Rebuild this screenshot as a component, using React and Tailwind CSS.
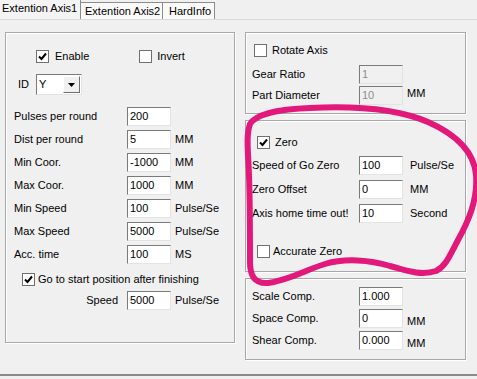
import React from 'react'

const Check = ({ checked }) => (
  <span className="w-[13px] h-[13px] shrink-0 bg-white border border-[#707070] flex items-center justify-center">
    {checked && (
      <svg width="9" height="9" viewBox="0 0 9 9">
        <path d="M1 4.5 L3.5 7 L8 1.5" fill="none" stroke="#000" strokeWidth="2" />
      </svg>
    )}
  </span>
)

const Box = ({ value, disabled, w = 'w-[44px]' }) => (
  <div
    className={`${w} h-[19px] shrink-0 border border-t-[#7a7a7a] border-l-[#7a7a7a] border-b-[#e3e3e3] border-r-[#e3e3e3] px-[2px] leading-[17px] ${
      disabled ? 'bg-[#f0f0f0] text-[#8d8d8d]' : 'bg-white text-black'
    }`}
  >
    {value}
  </div>
)

const Field = ({ label, value, unit, labelW, unitGap = 'ml-[4px]', disabled, unitClass = '' }) => (
  <div className="flex items-center h-[19px]">
    <span className={`${labelW} shrink-0 whitespace-nowrap`}>{label}</span>
    <Box value={value} disabled={disabled} />
    {unit && <span className={`${unitGap} whitespace-nowrap ${unitClass}`}>{unit}</span>}
  </div>
)

const Group = ({ className, children }) => (
  <div className={`border border-[#a8a8a8] shadow-[inset_1px_1px_0_#fff,1px_1px_0_#fff] flex flex-col ${className}`}>
    {children}
  </div>
)

const App = () => {
  const left = [
    ['Pulses per round', '200', ''],
    ['Dist per round', '5', 'MM'],
    ['Min Coor.', '-1000', 'MM'],
    ['Max Coor.', '1000', 'MM'],
    ['Min Speed', '100', 'Pulse/Se'],
    ['Max Speed', '5000', 'Pulse/Se'],
    ['Acc. time', '100', 'MS'],
  ]

  return (
    <div
      className="relative w-[477px] h-[379px] bg-[#f0f0f0] overflow-hidden text-[11px] text-black"
      style={{ fontFamily: '"Liberation Sans", Arial, sans-serif' }}
    >
      {/* tab strip */}
      <div className="flex items-end h-[19px]">
        <div className="h-[19px] w-[81px] pl-[2px] leading-[17px] bg-[#f4f4f4] border-r border-[#8c8c8c] relative z-10 whitespace-nowrap">
          Extention Axis1
        </div>
        <div className="h-[17px] w-[82px] pl-[4px] leading-[16px] bg-[#fafafa] border border-b-0 border-l-0 border-[#8c8c8c] whitespace-nowrap">
          Extention Axis2
        </div>
        <div className="h-[17px] w-[52px] pl-[6px] leading-[16px] bg-[#fafafa] border border-b-0 border-l-0 border-[#8c8c8c] whitespace-nowrap">
          HardInfo
        </div>
      </div>

      {/* tab page */}
      <div className="h-[357px] border-t border-[#dadada] border-b-2 border-b-[#8a8a8a] flex pt-[12px] pl-[5px]">
        {/* left group */}
        <Group className="w-[230px] h-[311px] pl-[8px]">
          <div className="flex items-center h-[14px] mt-[16px] ml-[22px]">
            <Check checked />
            <span className="ml-[6px]">Enable</span>
            <span className="ml-[50px]"><Check /></span>
            <span className="ml-[5px]">Invert</span>
          </div>
          <div className="flex items-center h-[21px] mt-[11px] ml-[4px]">
            <span className="w-[18px]">ID</span>
            <div className="w-[46px] h-[21px] bg-white border border-t-[#7a7a7a] border-l-[#7a7a7a] border-b-[#e3e3e3] border-r-[#e3e3e3] flex items-center justify-between pl-[2px]">
              <span>Y</span>
              <div className="w-[17px] h-[17px] mr-[1px] bg-[#f0f0f0] border border-t-white border-l-white border-b-[#6f6f6f] border-r-[#6f6f6f] flex items-center justify-center">
                <svg width="7" height="4" viewBox="0 0 7 4">
                  <path d="M0 0 H7 L3.5 4 Z" fill="#000" />
                </svg>
              </div>
            </div>
          </div>
          <div className="flex flex-col gap-[4px] mt-[12px]">
            {left.map(([l, v, u]) => (
              <Field key={l} label={l} value={v} unit={u} labelW="w-[113px]" />
            ))}
          </div>
          <div className="flex items-center h-[13px] mt-[9px] ml-[8px]">
            <Check checked />
            <span className="ml-[3px]">Go to start position after finishing</span>
          </div>
          <div className="flex items-center h-[19px] mt-[5px]">
            <span className="w-[113px] text-right pr-[9px]">Speed</span>
            <Box value="5000" />
            <span className="ml-[4px]">Pulse/Se</span>
          </div>
        </Group>

        {/* right column */}
        <div className="flex flex-col ml-[10px] w-[221px]">
          <Group className="h-[82px] pl-[6px]">
            <div className="flex items-center h-[13px] mt-[11px] ml-[2px]">
              <Check />
              <span className="ml-[5px]">Rotate Axis</span>
            </div>
            <div className="flex flex-col gap-[2px] mt-[8px]">
              <Field label="Gear Ratio" value="1" labelW="w-[107px]" disabled />
              <Field label="Part Diameter" value="10" unit="MM" labelW="w-[107px]" disabled unitClass="-mt-[5px]" />
            </div>
          </Group>

          <Group className="h-[152px] mt-[6px] pl-[6px]">
            <div className="flex items-center h-[13px] mt-[15px] ml-[5px]">
              <Check checked />
              <span className="ml-[5px]">Zero</span>
            </div>
            <div className="flex flex-col gap-[5px] mt-[7px]">
              <Field label="Speed of Go Zero" value="100" unit="Pulse/Se" labelW="w-[107px]" unitGap="ml-[7px]" />
              <Field label="Zero Offset" value="0" unit="MM" labelW="w-[107px]" unitGap="ml-[7px]" />
              <Field label="Axis home time out!" value="10" unit="Second" labelW="w-[107px]" unitGap="ml-[7px]" />
            </div>
            <div className="flex items-center h-[13px] mt-[22px] ml-[5px]">
              <Check />
              <span className="ml-[3px]">Accurate Zero</span>
            </div>
          </Group>

          <Group className="h-[82px] mt-[6px] pl-[6px]">
            <div className="flex flex-col gap-[3px] mt-[8px]">
              <Field label="Scale Comp." value="1.000" labelW="w-[107px]" />
              <Field label="Space Comp." value="0" unit="MM" labelW="w-[107px]" unitClass="mt-[5px]" />
              <Field label="Shear Comp." value="0.000" unit="MM" labelW="w-[107px]" unitClass="mt-[5px]" />
            </div>
          </Group>
        </div>
      </div>

      {/* pink annotation scribble */}
      <svg className="absolute left-0 top-0 pointer-events-none" width="477" height="379" viewBox="0 0 477 379">
        <path
          d="M250 124 C256 114 280 109 310 108 C350 106 395 108 428 122 C455 134 474 150 476 175 C478 200 468 222 458 240 C450 255 446 266 436 271 C420 276 405 270 390 266 C370 260 345 258 325 264 C305 270 290 280 268 283 C254 284 250 275 250 262 C250 240 250 205 249 175 C248 150 246 135 250 124"
          fill="none"
          stroke="#e2187b"
          strokeWidth="6"
          strokeLinecap="round"
          strokeLinejoin="round"
        />
      </svg>
    </div>
  )
}

export default App
